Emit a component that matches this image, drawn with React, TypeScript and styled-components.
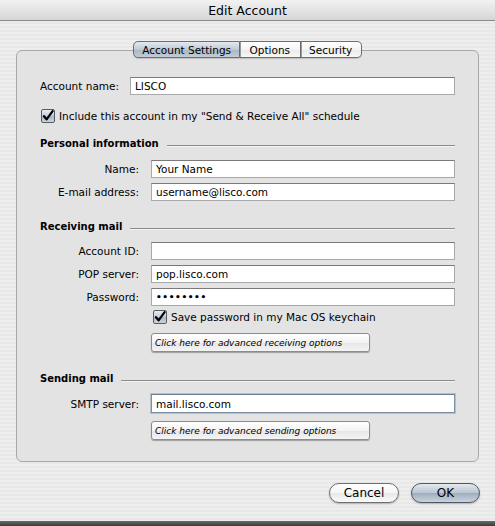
import styled, { createGlobalStyle } from 'styled-components'

const GlobalStyle = createGlobalStyle`
  html, body {
    margin: 0;
    padding: 0;
  }
  body {
    font-family: "DejaVu Sans", "Liberation Sans", sans-serif;
    font-size: 10px;
    color: #000;
  }
`

const Window = styled.div`
  width: 495px;
  height: 526px;
  display: flex;
  flex-direction: column;
  background: repeating-linear-gradient(
    to bottom,
    #eeeeee 0px,
    #eeeeee 2px,
    #e8e8e8 2px,
    #e8e8e8 4px
  );
  overflow: hidden;
`

const TitleBar = styled.div`
  height: 20px;
  flex: none;
  display: flex;
  align-items: center;
  justify-content: center;
  font-size: 12.5px;
  background: linear-gradient(to bottom, #f2f2f2, #d6d6d6);
  border-bottom: 1px solid #8a8a8a;
`

const Body = styled.div`
  flex: 1;
  display: flex;
  flex-direction: column;
  padding-top: 20px;
`

const TabBar = styled.div`
  display: flex;
  justify-content: center;
  height: 17px;
  position: relative;
  z-index: 1;
`

const Tab = styled.div<{ $active?: boolean; $first?: boolean; $last?: boolean }>`
  height: 17px;
  box-sizing: border-box;
  padding: 0 ${(p) => (p.$first ? 8 : p.$last ? 8.5 : 9.5)}px;
  display: flex;
  align-items: center;
  font-size: 10.5px;
  border: 1px solid #6e6e6e;
  border-left: ${(p) => (p.$first ? '1px solid #6e6e6e' : 'none')};
  border-radius: ${(p) => (p.$first ? '5px 0 0 5px' : p.$last ? '0 5px 5px 0' : '0')};
  background: ${(p) =>
    p.$active
      ? 'linear-gradient(to bottom, #e4e9ef 0%, #bfc9d4 50%, #aab6c3 51%, #c3ccd6 100%)'
      : 'linear-gradient(to bottom, #ffffff 0%, #f4f4f4 50%, #e9e9e9 51%, #f8f8f8 100%)'};
  box-shadow: 0 1px 1px rgba(0, 0, 0, 0.15);
  & + & {
    box-shadow: inset 1px 0 0 #9a9a9a, 0 1px 1px rgba(0, 0, 0, 0.15);
  }
`

const Panel = styled.div`
  margin: -8px 16px 0 16px;
  height: 412px;
  box-sizing: border-box;
  border: 1px solid #a8a8a8;
  border-radius: 6px;
  background: #e3e3e3;
  padding: 26px 23px 0 23px;
  display: flex;
  flex-direction: column;
`

const AccountRow = styled.div`
  display: flex;
  align-items: center;
  height: 18px;
`

const AccountLabel = styled.label`
  width: 90px;
  flex: none;
  font-size: 10.5px;
`

const TextField = styled.div<{ $focused?: boolean }>`
  flex: 1;
  height: ${(p) => (p.$focused ? 19 : 18)}px;
  box-sizing: border-box;
  background: #fff;
  border: 1px solid ${(p) => (p.$focused ? '#7d8fa3' : '#a9a9a9')};
  border-top-color: ${(p) => (p.$focused ? '#6d7f94' : '#7a7a7a')};
  box-shadow: ${(p) => (p.$focused ? '0 0 0 1px #b3c1cf' : 'none')};
  display: flex;
  align-items: center;
  padding-left: 4px;
  font-size: 10.5px;
`

const Dots = styled.span`
  font-size: 9px;
  letter-spacing: 0.6px;
  font-weight: bold;
`

const CheckRow = styled.div<{ $top: number; $indent: number }>`
  display: flex;
  align-items: center;
  gap: 4px;
  height: 14px;
  margin-top: ${(p) => p.$top}px;
  margin-left: ${(p) => p.$indent}px;
  font-size: 10.5px;
`

const CheckBox = styled.span`
  width: 14px;
  height: 14px;
  box-sizing: border-box;
  flex: none;
  border: 1px solid #555d66;
  border-radius: 2px;
  background: linear-gradient(to bottom, #e8edf2 0%, #c3ccd6 50%, #a9b5c2 51%, #ccd5de 100%);
  display: flex;
  align-items: center;
  justify-content: center;
`

const SectionHeading = styled.div<{ $top: number }>`
  display: flex;
  align-items: center;
  height: 14px;
  margin-top: ${(p) => p.$top}px;
  font-weight: bold;
  font-size: 10px;
  gap: 8px;
`

const HeadingRule = styled.div`
  flex: 1;
  height: 1px;
  background: #8a8a8a;
  margin-top: 4px;
  box-shadow: 0 1px 0 #f4f4f4;
`

const FieldGrid = styled.div<{ $top: number }>`
  display: grid;
  grid-template-columns: 99px 1fr;
  column-gap: 12px;
  row-gap: 5px;
  margin-top: ${(p) => p.$top}px;
  align-items: center;
`

const FieldLabel = styled.label`
  text-align: right;
  font-size: 10.5px;
`

const FieldCell = styled.div`
  display: flex;
`

const AdvancedButton = styled.div<{ $top: number }>`
  width: 219px;
  height: 19px;
  box-sizing: border-box;
  margin-top: ${(p) => p.$top}px;
  margin-left: 111px;
  border: 1px solid #8c8c8c;
  border-radius: 3px;
  background: linear-gradient(to bottom, #ffffff 0%, #f3f3f3 50%, #e6e6e6 51%, #f4f4f4 100%);
  box-shadow: 0 1px 1px rgba(0, 0, 0, 0.3);
  display: flex;
  align-items: center;
  padding-left: 3px;
  font-size: 9px;
  font-style: italic;
`

const ButtonBar = styled.div`
  display: flex;
  justify-content: flex-end;
  gap: 12px;
  padding: 21px 15px 0 0;
`

const PushButton = styled.div<{ $default?: boolean; $width: number }>`
  width: ${(p) => p.$width}px;
  height: 20px;
  box-sizing: border-box;
  border-radius: 10px;
  border: 1px solid ${(p) => (p.$default ? '#4f5863' : '#6f6f6f')};
  background: ${(p) =>
    p.$default
      ? 'linear-gradient(to bottom, #e3e9ef 0%, #b9c5d1 50%, #9fadbc 51%, #c8d3de 100%)'
      : 'linear-gradient(to bottom, #ffffff 0%, #f5f5f5 50%, #e8e8e8 51%, #fafafa 100%)'};
  box-shadow: 0 1px 2px rgba(0, 0, 0, 0.25);
  display: flex;
  align-items: center;
  justify-content: center;
  font-size: 12px;
`

const BottomEdge = styled.div`
  margin-top: auto;
  height: 5px;
  background: linear-gradient(to bottom, #6a6a6a, #3a3a3a);
`

const Check = () => (
  <svg width="12" height="12" viewBox="0 0 12 12">
    <path
      d="M2 6.2 L4.6 9.4 L10.6 1.2"
      fill="none"
      stroke="#000"
      strokeWidth="2.2"
      strokeLinecap="round"
      strokeLinejoin="round"
    />
  </svg>
)

const Field = ({ label, value, focused }: { label: string; value?: React.ReactNode; focused?: boolean }) => (
  <>
    <FieldLabel>{label}</FieldLabel>
    <FieldCell>
      <TextField $focused={focused}>{value}</TextField>
    </FieldCell>
  </>
)

const App = () => {
  return (
    <Window>
      <GlobalStyle />
      <TitleBar>Edit Account</TitleBar>
      <Body>
        <TabBar>
          <Tab $active $first>Account Settings</Tab>
          <Tab>Options</Tab>
          <Tab $last>Security</Tab>
        </TabBar>
        <Panel>
          <AccountRow>
            <AccountLabel>Account name:</AccountLabel>
            <TextField>LISCO</TextField>
          </AccountRow>
          <CheckRow $top={14} $indent={1}>
            <CheckBox>
              <Check />
            </CheckBox>
            Include this account in my "Send &amp; Receive All" schedule
          </CheckRow>

          <SectionHeading $top={13}>
            Personal information
            <HeadingRule />
          </SectionHeading>
          <FieldGrid $top={10}>
            <Field label="Name:" value="Your Name" />
            <Field label="E-mail address:" value="username@lisco.com" />
          </FieldGrid>

          <SectionHeading $top={18}>
            Receiving mail
            <HeadingRule />
          </SectionHeading>
          <FieldGrid $top={9}>
            <Field label="Account ID:" />
            <Field label="POP server:" value="pop.lisco.com" />
            <Field label="Password:" value={<Dots>••••••••</Dots>} />
          </FieldGrid>
          <CheckRow $top={4} $indent={113}>
            <CheckBox>
              <Check />
            </CheckBox>
            Save password in my Mac OS keychain
          </CheckRow>
          <AdvancedButton $top={9}>Click here for advanced receiving options</AdvancedButton>

          <SectionHeading $top={19}>
            Sending mail
            <HeadingRule />
          </SectionHeading>
          <FieldGrid $top={9}>
            <Field label="SMTP server:" value="mail.lisco.com" focused />
          </FieldGrid>
          <AdvancedButton $top={8}>Click here for advanced sending options</AdvancedButton>
        </Panel>
        <ButtonBar>
          <PushButton $width={70}>Cancel</PushButton>
          <PushButton $width={69} $default>
            OK
          </PushButton>
        </ButtonBar>
        <BottomEdge />
      </Body>
    </Window>
  )
}

export default App
